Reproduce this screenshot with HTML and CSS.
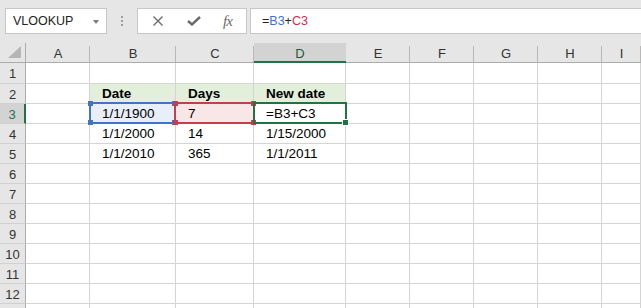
FILE: index.html
```html
<!DOCTYPE html>
<html lang="en">
<head>
  <meta charset="UTF-8">
  <title>VLOOKUP - dates</title>
  <link rel="stylesheet" href="styles.css">
</head>
<body>
  <!-- Name box and formula bar -->
  <div class="toolbar">
    <div class="name-box">
      <span>VLOOKUP</span>
      <span class="caret"></span>
    </div>
    <div class="grip"><i></i><i></i><i></i></div>
    <div class="fx-buttons">
      <svg width="12" height="10" viewBox="0 0 12 10"><path d="M1.5 0.5 L10.5 9.5 M10.5 0.5 L1.5 9.5" stroke="#6b6b6b" stroke-width="1.4" fill="none"/></svg>
      <svg width="14" height="10" viewBox="0 0 14 10"><path d="M1 5 L5 8.5 L13 1" stroke="#6b6b6b" stroke-width="2.4" fill="none"/></svg>
      <span class="fx">fx</span>
    </div>
    <div class="formula">=<span class="ref-b">B3</span>+<span class="ref-c">C3</span></div>
  </div>

  <!-- Worksheet -->
  <div class="sheet-wrap">
    <div class="sheet">
      <div class="corner"><svg width="14" height="13" viewBox="0 0 14 13"><polygon points="13,0 13,12 0,12" fill="#b5b5b5"/></svg></div>
      <div class="col-head">A</div>
      <div class="col-head">B</div>
      <div class="col-head">C</div>
      <div class="col-head active">D</div>
      <div class="col-head">E</div>
      <div class="col-head">F</div>
      <div class="col-head">G</div>
      <div class="col-head">H</div>
      <div class="col-head">I</div>
    </div>
    <div id="rows"></div>

    <div class="sel sel-b"><b class="h tl"></b><b class="h tr"></b><b class="h bl"></b><b class="h br"></b></div>
    <div class="sel sel-c"><b class="h tl"></b><b class="h tr"></b><b class="h bl"></b><b class="h br"></b></div>
    <div class="sel sel-d"><b class="fill-handle"></b></div>
  </div>

<script>
const data = {
  2: ['', 'Date', 'Days', 'New date'],
  3: ['', '1/1/1900', '7', '=B3+C3'],
  4: ['', '1/1/2000', '14', '1/15/2000'],
  5: ['', '1/1/2010', '365', '1/1/2011']
};

function buildRows() {
  const rows = document.getElementById('rows');
  let html = '';
  // row 13 only peeks in at the bottom edge, no label visible
  for (let r = 1; r <= 13; r++) {
    const vals = data[r] || [];
    html += `<div class="sheet row${r === 1 ? ' first' : ''}">`;
    html += `<div class="row-head${r === 3 ? ' active' : ''}">${r < 13 ? r : ''}</div>`;
    for (let c = 0; c < 9; c++) {
      let cls = 'cell';
      if (r === 2 && c >= 1 && c <= 3) cls += ' hdr';
      if (r === 3 && c === 1) cls += ' fill-b';
      if (r === 3 && c === 2) cls += ' fill-c';
      html += `<div class="${cls}">${vals[c] || ''}</div>`;
    }
    html += '</div>';
  }
  rows.innerHTML = html;
}

buildRows();
</script>
</body>
</html>
```

FILE: styles.css
```css
body {
  margin: 0;
  width: 641px;
  height: 308px;
  overflow: hidden;
  background: #fff;
  font-family: "Liberation Sans", Arial, sans-serif;
  color: #000;
}

/* formula bar */
.toolbar {
  height: 43px;
  background: #e6e6e6;
  box-sizing: border-box;
  padding-top: 8px;
  display: flex;
  align-items: flex-start;
}

.name-box {
  margin-left: 5px;
  width: 102px;
  height: 26px;
  box-sizing: border-box;
  background: #fff;
  border: 1px solid #c6c6c6;
  display: flex;
  align-items: center;
  justify-content: space-between;
  padding: 0 7px 0 7px;
  font-size: 12.5px;
  color: #222;
}

.caret {
  width: 0;
  height: 0;
  border-left: 3.5px solid transparent;
  border-right: 3.5px solid transparent;
  border-top: 4px solid #7a7a7a;
  margin-top: 1px;
}

.grip {
  width: 30px;
  height: 26px;
  display: flex;
  flex-direction: column;
  align-items: center;
  justify-content: center;
  gap: 2px;
}

.grip i {
  width: 2px;
  height: 2px;
  background: #9d9d9d;
}

.fx-buttons {
  width: 110px;
  height: 26px;
  box-sizing: border-box;
  background: #fff;
  border: 1px solid #c6c6c6;
  display: flex;
  align-items: center;
  padding-left: 14px;
  gap: 23px;
}

.fx {
  font-family: "Liberation Serif", serif;
  font-style: italic;
  font-size: 15px;
  color: #6b6b6b;
  margin-left: -1px;
  letter-spacing: -1px;
}

.formula {
  margin-left: 3px;
  flex: 1;
  height: 26px;
  box-sizing: border-box;
  background: #fff;
  border: 1px solid #c6c6c6;
  border-right: none;
  padding-left: 11px;
  display: flex;
  align-items: center;
  font-size: 12.5px;
  color: #222;
}

.ref-b {
  color: #3f6fd1;
}

.ref-c {
  color: #cc2f55;
}

/* sheet grid */
.sheet-wrap {
  position: relative;
}

.sheet {
  display: grid;
  grid-template-columns: 26px 64px 86px 78px 92px 64px 64px 64px 64px 1fr;
  height: 20px;
}

.row.first {
  height: 21px;
}

.corner, .col-head {
  background: #e6e6e6;
  border-bottom: 1px solid #ababab;
  box-sizing: border-box;
}

.corner {
  display: flex;
  align-items: flex-end;
  justify-content: flex-end;
  padding: 0 3px 3px 0;
  border-right: 1px solid #ababab;
}

.col-head {
  background: linear-gradient(#b8b8b8, #b8b8b8) right bottom / 1px 16px no-repeat, #e6e6e6;
  font-size: 13px;
  color: #333;
  display: flex;
  align-items: center;
  justify-content: center;
  padding-top: 2px;
}

.col-head.active {
  background: #d3d3d3;
  border-bottom: 2px solid #217346;
  color: #215c3c;
  padding-top: 3px;
}

.row-head {
  background: #e6e6e6;
  border-right: 1px solid #ababab;
  border-bottom: 1px solid #d0d0d0;
  box-sizing: border-box;
  font-size: 13px;
  color: #333;
  display: flex;
  align-items: center;
  justify-content: center;
  padding-top: 1px;
}

.row-head.active {
  background: #d3d3d3;
  border-right: 2px solid #217346;
  color: #217346;
}

.cell {
  border-right: 1px solid #d4d4d4;
  border-bottom: 1px solid #d4d4d4;
  box-sizing: border-box;
  font-size: 13.5px;
  padding: 0 0 2px 12px;
  display: flex;
  align-items: flex-end;
  white-space: nowrap;
}

.cell.hdr {
  background: #e2efda;
  font-weight: bold;
}

.cell.fill-b {
  background: #e9eff9;
}

.cell.fill-c {
  background: #f9e6e7;
}

/* reference highlights drawn over the grid */
.sel {
  position: absolute;
  top: 59px;
  height: 22px;
  box-sizing: border-box;
  border: 2px solid;
}

.sel-b {
  left: 89px;
  width: 87px;
  border-color: #4472c4;
  color: #4472c4;
}

.sel-c {
  left: 174px;
  width: 81px;
  border-color: #c43e4b;
  color: #c43e4b;
}

.sel-d {
  left: 253px;
  width: 94px;
  border-color: #217346;
}

.h {
  position: absolute;
  width: 5px;
  height: 5px;
  background: currentColor;
}

.tl { left: -3px; top: -3px; }
.tr { right: -3px; top: -3px; }
.bl { left: -3px; bottom: -3px; }
.br { right: -3px; bottom: -3px; }

.fill-handle {
  position: absolute;
  right: -4px;
  bottom: -4px;
  width: 5px;
  height: 5px;
  background: #217346;
  border: 1px solid #fff;
}
```
